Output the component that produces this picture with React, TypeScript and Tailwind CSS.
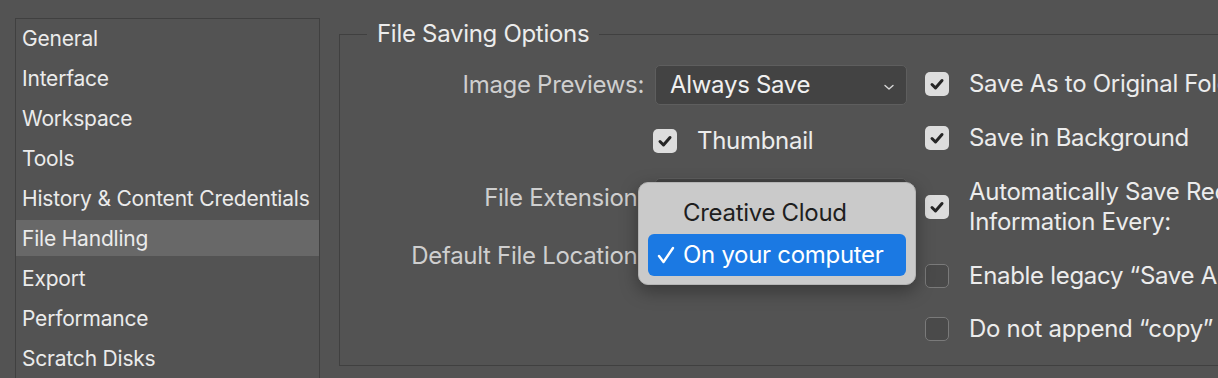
import React from "react";

const font = { fontFamily: "Inter, 'Noto Sans', 'Liberation Sans', sans-serif" };

const navItems = [
  "General",
  "Interface",
  "Workspace",
  "Tools",
  "History & Content Credentials",
  "File Handling",
  "Export",
  "Performance",
  "Scratch Disks",
];

function CheckBox({ checked }: { checked: boolean }) {
  if (!checked) {
    return (
      <div className="w-[24px] h-[24px] shrink-0 rounded-[5px] border-[1.5px] border-[#7a7a7a] bg-[#4a4a4a]" />
    );
  }
  return (
    <div className="w-[24px] h-[24px] shrink-0 rounded-[5px] bg-[#dddddd] flex items-center justify-center">
      <svg width="24" height="24" viewBox="0 0 24 24">
        <polyline
          points="7,12.5 10.5,16 17,8.5"
          fill="none"
          stroke="#262626"
          strokeWidth="3"
          strokeLinecap="round"
          strokeLinejoin="round"
        />
      </svg>
    </div>
  );
}

function Select({ value }: { value?: string }) {
  return (
    <div className="w-[252px] h-[40px] shrink-0 rounded-[5px] border border-[#5e5e5e] bg-[#434343] flex items-center justify-between pl-[14px] pr-[10px]">
      <span className="text-[24px] tracking-[-0.3px] text-[#f0f0f0]">{value}</span>
      <svg width="14" height="14" viewBox="0 0 14 14" className="mt-[3px]">
        <polyline points="3,5.5 7,9 11,5.5" fill="none" stroke="#d8d8d8" strokeWidth="1.4" strokeLinecap="round" strokeLinejoin="round" />
      </svg>
    </div>
  );
}

function CheckRow({ checked, children, className }: { checked: boolean; children: React.ReactNode; className?: string }) {
  return (
    <div className={`flex items-center gap-[20px] whitespace-nowrap ${className ?? ""}`}>
      <CheckBox checked={checked} />
      <div className="text-[24px] tracking-[-0.3px] leading-[30px] text-[#ececec]">{children}</div>
    </div>
  );
}

export default function App() {
  return (
    <div style={font} className="w-[1218px] h-[378px] bg-[#535353] overflow-hidden flex relative">
      {/* Sidebar list */}
      <div className="ml-[15px] mt-[18px] w-[305px] h-[400px] shrink-0 border border-b-0 border-[#404040] flex flex-col">
        {navItems.map((item) => (
          <div key={item} className="h-[40px] pt-[1px]">
            <div
              className={`h-[36px] flex items-center pl-[6px] pt-[2px] text-[21px] tracking-[-0.2px] text-[#ebebeb] whitespace-nowrap ${
                item === "File Handling" ? "bg-[#686868]" : ""
              }`}
            >
              {item}
            </div>
          </div>
        ))}
      </div>

      {/* File Saving Options group */}
      <fieldset className="ml-[19px] mt-[22px] w-[1000px] h-[344px] shrink-0 border border-[#404040] flex">
        <legend className="ml-[27px] px-[10px] text-[24px] tracking-[-0.3px] leading-[24px] text-[#ececec]">File Saving Options</legend>

        <div className="flex">
          {/* label + control column */}
          <div className="flex flex-col">
            <div className="mt-[19px] h-[40px] flex items-center">
              <div className="w-[315px] pr-[11px] text-right text-[24px] tracking-[-0.3px] text-[#cfcfcf] whitespace-nowrap">Image Previews:</div>
              <Select value="Always Save" />
            </div>
            <div className="mt-[20px] h-[32px] flex items-center">
              <div className="w-[313px]" />
              <CheckRow checked>Thumbnail</CheckRow>
            </div>
            <div className="mt-[21px] h-[40px] flex items-center">
              <div className="w-[315px] pr-[11px] text-right text-[24px] tracking-[-0.3px] text-[#cfcfcf] whitespace-nowrap">File Extension:</div>
              <Select />
            </div>
            <div className="mt-[18px] h-[40px] flex items-center">
              <div className="w-[315px] pr-[11px] text-right text-[24px] tracking-[-0.3px] text-[#cfcfcf] whitespace-nowrap">Default File Location:</div>
              <Select />
            </div>
          </div>

          {/* right checkbox column */}
          <div className="ml-[18px] flex flex-col">
            <CheckRow checked className="mt-[23px]">Save As to Original Folder</CheckRow>
            <CheckRow checked className="mt-[24px]">Save in Background</CheckRow>
            <CheckRow checked className="mt-[24px]">
              Automatically Save Recovery
              <br />
              Information Every:
            </CheckRow>
            <CheckRow checked={false} className="mt-[24px]">Enable legacy “Save As”</CheckRow>
            <CheckRow checked={false} className="mt-[23px]">Do not append “copy”</CheckRow>
          </div>
        </div>
      </fieldset>

      {/* Open popup menu */}
      <div className="absolute left-[638px] top-[182px] w-[278px] h-[103px] rounded-[10px] bg-[#cacaca] border border-[#b4b4b4] shadow-[0_6px_18px_rgba(0,0,0,0.35)] pt-[9px] px-[9px]">
        <div className="h-[42px] flex items-center pl-[35px] text-[24px] tracking-[-0.3px] text-[#1e1e1e]">Creative Cloud</div>
        <div className="h-[42px] rounded-[6px] bg-[#1b79e3] flex items-center pl-[9px] text-[24px] tracking-[-0.3px] text-white">
          <svg width="18" height="20" viewBox="0 0 18 20" className="mr-[8px]">
            <polyline points="2,11 6.5,17 16,3" fill="none" stroke="#ffffff" strokeWidth="2.4" strokeLinecap="round" strokeLinejoin="round" />
          </svg>
          <span>On your computer</span>
        </div>
      </div>
    </div>
  );
}
